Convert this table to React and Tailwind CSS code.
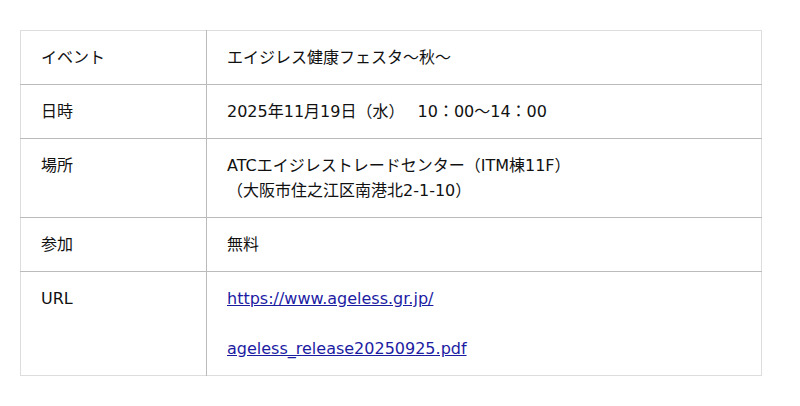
const rows = [
  { label: "イベント", value: "エイジレス健康フェスタ〜秋〜" },
  { label: "日時", value: "2025年11月19日（水）　 10：00〜14：00" },
  {
    label: "場所",
    value: (
      <>
        ATCエイジレストレードセンター（ITM棟11F）
        <br />
        （大阪市住之江区南港北2-1-10）
      </>
    ),
  },
  { label: "参加", value: "無料" },
  {
    label: "URL",
    value: (
      <>
        <a href="#" className="text-[#1c1ca3] underline">
          https://www.ageless.gr.jp/
        </a>
        <br />
        <br />
        <a href="#" className="text-[#1c1ca3] underline">
          ageless_release20250925.pdf
        </a>
      </>
    ),
  },
];

export default function App() {
  return (
    <div
      className="bg-white w-[800px] h-[406px] pt-[30px] pl-[20px] text-[16px] leading-[25px] text-[#111]"
      style={{ fontFamily: '"DejaVu Sans", "Noto Sans CJK JP", sans-serif' }}
    >
      <table className="w-[742px] border-collapse border border-[#dddddd]">
        <tbody>
          {rows.map((row) => (
            <tr key={row.label} className="border-b border-[#bbbbbb] last:border-b-[#dddddd]">
              <td className="w-[186px] align-top px-[20px] py-[14px] border-r border-[#bbbbbb]">
                {row.label}
              </td>
              <td className="align-top px-[20px] py-[14px]">{row.value}</td>
            </tr>
          ))}
        </tbody>
      </table>
    </div>
  );
}
